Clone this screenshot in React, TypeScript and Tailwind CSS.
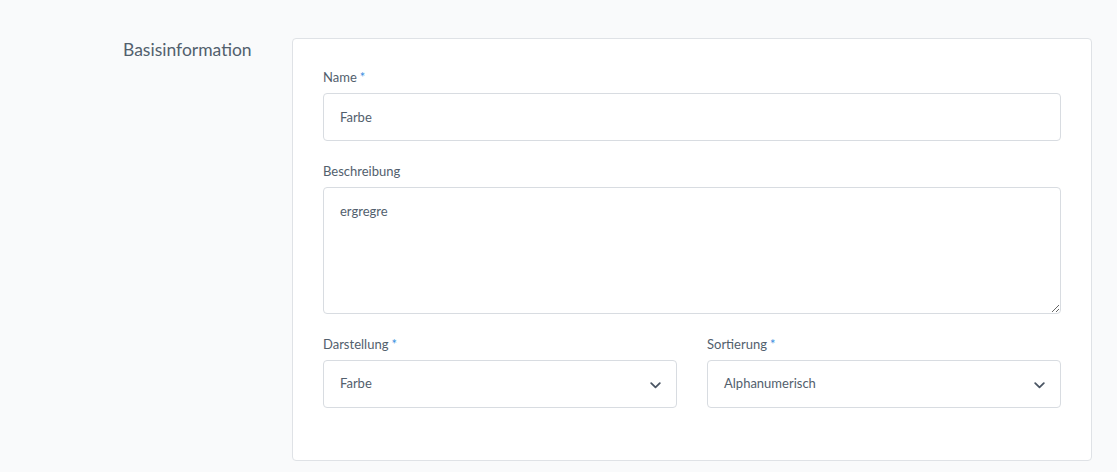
import React from "react";

const font = { fontFamily: '"Source Sans Pro", Lato, "Noto Sans", sans-serif' };

function Label({ text, required }: { text: string; required?: boolean }) {
  return (
    <label className="mb-[7px] block text-[13px] leading-[18px] text-[#52606d]">
      {text}
      {required && <span className="ml-[3px] text-[#3b8fe0]">*</span>}
    </label>
  );
}

function Select({ value }: { value: string }) {
  return (
    <div className="flex h-[48px] items-center justify-between rounded-[4px] border border-[#d8dce1] bg-white pl-[16px] pr-[15px] text-[13px] text-[#52606d]">
      <span>{value}</span>
      <svg width="11" height="7" viewBox="0 0 11 7" fill="none" className="mt-[2px]">
        <path d="M1.2 1.2 5.5 5.3l4.3-4.1" stroke="#4a5563" strokeWidth="1.8" strokeLinecap="round" strokeLinejoin="round" />
      </svg>
    </div>
  );
}

export default function App() {
  return (
    <div className="min-h-[472px] bg-[#f9fafb] pl-[123px] pr-[25px] pt-[38px]" style={font}>
      <div className="flex">
        <h2 className="mt-[1px] w-[169px] shrink-0 text-[17.5px] leading-[22px] text-[#52606d]">Basisinformation</h2>
        <div className="flex-1 rounded-[4px] border border-[#dfe2e6] bg-white px-[30px] pb-[31px] pt-[29px]">
          <div className="mb-[21px]">
            <Label text="Name" required />
            <input
              defaultValue="Farbe"
              className="block h-[48px] w-full rounded-[4px] border border-[#d8dce1] bg-white px-[16px] text-[13px] text-[#52606d] outline-none"
            />
          </div>
          <div className="mb-[21px]">
            <Label text="Beschreibung" />
            <textarea
              defaultValue="ergregre"
              className="block h-[127px] w-full rounded-[4px] border border-[#d8dce1] bg-white px-[16px] py-[13px] text-[13px] leading-[20px] text-[#52606d] outline-none"
            />
          </div>
          <div className="mb-[21px] grid grid-cols-2 gap-[30px]">
            <div>
              <Label text="Darstellung" required />
              <Select value="Farbe" />
            </div>
            <div>
              <Label text="Sortierung" required />
              <Select value="Alphanumerisch" />
            </div>
          </div>
        </div>
      </div>
    </div>
  );
}
